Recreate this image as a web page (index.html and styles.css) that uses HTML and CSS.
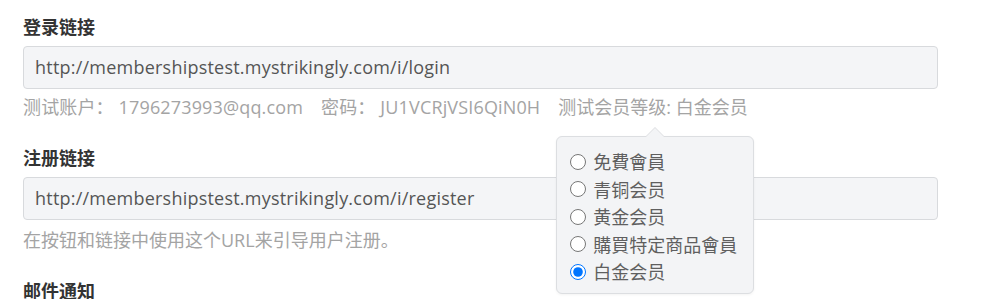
FILE: index.html
```html
<!DOCTYPE html>
<html lang="zh">
<head>
<meta charset="utf-8">
<link rel="stylesheet" href="styles.css">
</head>
<body>
<div class="page">
  <section class="field">
    <h3 class="label">登录链接</h3>
    <div class="input">http://membershipstest.mystrikingly.com/i/login</div>
    <div class="help help-first">
      <span>测试账户： 1796273993@qq.com</span>
      <span>密码： JU1VCRjVSI6QiN0H</span>
      <span class="level">测试会员等级: 白金会员
        <div class="popover">
          <label class="opt"><input type="radio" name="lv"><span>免費會員</span></label>
          <label class="opt"><input type="radio" name="lv"><span>青铜会员</span></label>
          <label class="opt"><input type="radio" name="lv"><span>黄金会员</span></label>
          <label class="opt"><input type="radio" name="lv"><span>購買特定商品會員</span></label>
          <label class="opt"><input type="radio" name="lv" checked><span>白金会员</span></label>
        </div>
      </span>
    </div>
  </section>
  <section class="field">
    <h3 class="label">注册链接</h3>
    <div class="input">http://membershipstest.mystrikingly.com/i/register</div>
    <div class="help help-second">在按钮和链接中使用这个URL来引导用户注册。</div>
  </section>
  <section class="field">
    <h3 class="label">邮件通知</h3>
  </section>
</div>
</body>
</html>
```
FILE: styles.css
```css
* { box-sizing: border-box; }
html, body { margin: 0; padding: 0; background: #fff; }
body {
  font-family: "Open Sans", "Noto Sans CJK SC", sans-serif;
  font-size: 18px;
  color: #555;
  height: 299px;
  overflow: hidden;
}
.page {
  width: 938px;
  padding: 14px 0 0 23px;
}
.field { margin-bottom: 25px; }
.label {
  margin: 0 0 6px;
  font-size: 18px;
  line-height: 26px;
  font-weight: 700;
  color: #333;
}
.input {
  height: 43px;
  border: 1px solid #d8dadd;
  border-radius: 4px;
  background: #f4f5f7;
  padding: 0 11px;
  line-height: 41px;
  color: #555;
  font-size: 18px;
  letter-spacing: 0.22px;
}
.help {
  color: #a4a4a4;
  font-size: 18px;
  line-height: 26px;
}
.help-first { margin-top: 5px; display: flex; gap: 18px; letter-spacing: 0.15px; }
.help-second { margin-top: 7px; }
.level { position: relative; display: inline-block; letter-spacing: 0; }
.popover {
  position: absolute;
  left: -2px;
  top: 42px;
  width: 198px;
  padding: 11px 0 7px 13px;
  background: #f3f4f6;
  border: 1px solid #dcdee1;
  border-radius: 6px;
  box-shadow: 0 1px 3px rgba(0,0,0,0.05);
  color: #5f5f5f;
  line-height: 27.5px;
  z-index: 5;
}
.popover::before,
.popover::after {
  content: "";
  position: absolute;
  left: 50%;
  width: 0;
  height: 0;
  border-style: solid;
  transform: translateX(-50%);
}
.popover::before {
  top: -10px;
  border-width: 0 10px 10px 10px;
  border-color: transparent transparent #dcdee1 transparent;
}
.popover::after {
  top: -9px;
  border-width: 0 9px 9px 9px;
  border-color: transparent transparent #f3f4f6 transparent;
}
.opt {
  display: flex;
  align-items: center;
  height: 27.5px;
  font-size: 18px;
  font-family: "Noto Sans CJK SC", sans-serif;
}
.opt input {
  width: 16px;
  height: 16px;
  margin: 0 7px 0 0;
}
```
